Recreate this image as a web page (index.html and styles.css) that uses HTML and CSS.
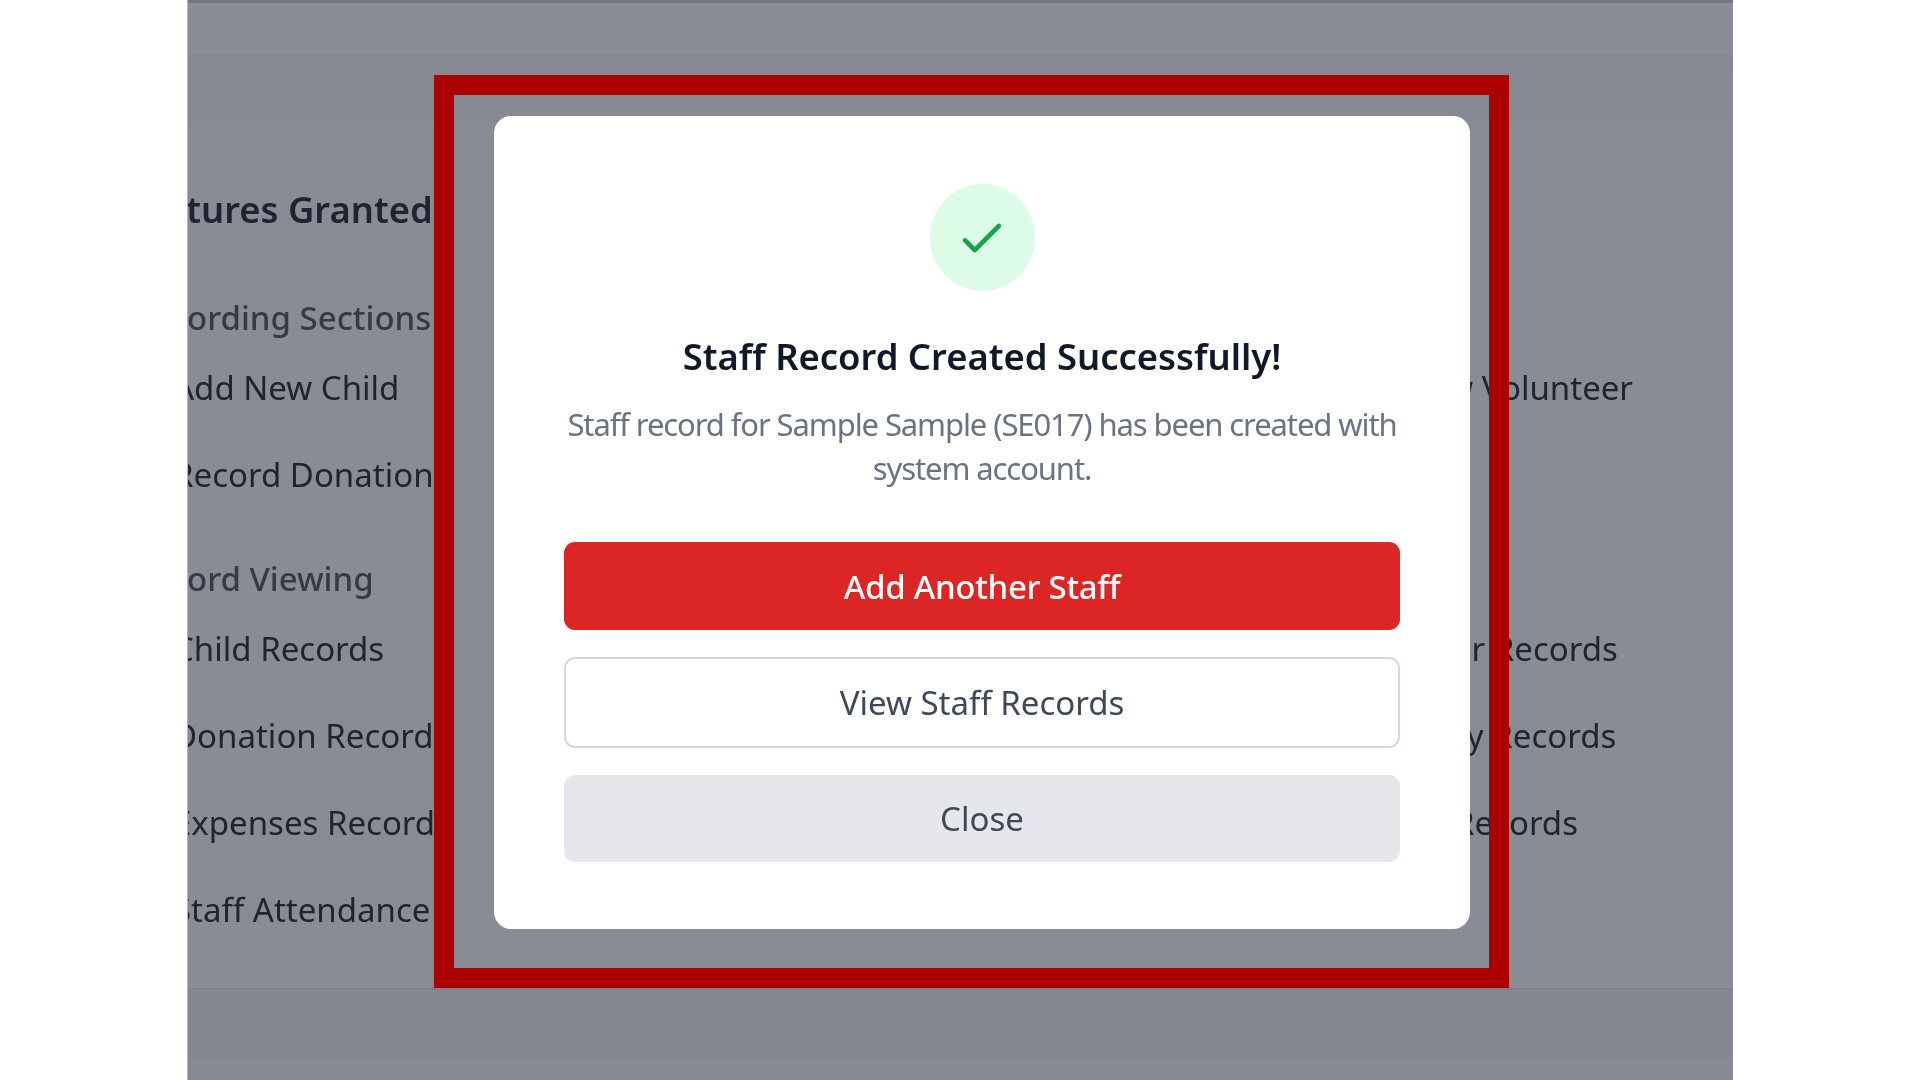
FILE: index.html
```html
<!DOCTYPE html>
<html lang="en">
<head>
<meta charset="utf-8">
<title>Staff Record Created</title>
<link rel="stylesheet" href="styles.css">
</head>
<body>
<div class="page">
  <header class="bar bar-top"></header>
  <div class="bar bar-sub"></div>
  <main class="content">
    <section class="features">
      <h2 class="features-title">Features Granted</h2>
      <div class="feature-columns">
        <div class="column column-left">
          <h3 class="group-title">Recording Sections</h3>
          <ul class="group group-record">
            <li>Add New Child</li>
            <li>Record Donation</li>
          </ul>
          <h3 class="group-title group-title-view">Record Viewing</h3>
          <ul class="group">
            <li>Child Records</li>
            <li>Donation Records</li>
            <li>Expenses Records</li>
            <li>Staff Attendance</li>
          </ul>
        </div>
        <div class="column column-right">
          <h3 class="group-title">&nbsp;</h3>
          <ul class="group group-record">
            <li>Add New Volunteer</li>
            <li>&nbsp;</li>
          </ul>
          <h3 class="group-title group-title-view">&nbsp;</h3>
          <ul class="group">
            <li>Volunteer Records</li>
            <li>Inventory Records</li>
            <li>Activity Records</li>
          </ul>
        </div>
      </div>
    </section>
  </main>
  <div class="bar bar-foot"></div>
  <div class="bar bar-end"></div>

  <div class="overlay">
    <div class="modal" role="dialog" aria-labelledby="modal-title">
      <div class="success-badge">
        <svg class="success-icon" viewBox="0 0 24 24" fill="none" stroke="currentColor" stroke-width="1.9" stroke-linecap="round" stroke-linejoin="round" aria-hidden="true"><path d="M5 13l4 4L19 7"/></svg>
      </div>
      <h1 class="modal-title" id="modal-title">Staff Record Created Successfully!</h1>
      <p class="modal-text">Staff record for Sample Sample (SE017) has been created with system account.</p>
      <div class="modal-actions">
        <button class="btn btn-primary" type="button">Add Another Staff</button>
        <button class="btn btn-outline" type="button">View Staff Records</button>
        <button class="btn btn-muted" type="button">Close</button>
      </div>
    </div>
    <div class="annotation" aria-hidden="true"></div>
  </div>
</div>
</body>
</html>
```

FILE: styles.css
```css
* { box-sizing: border-box; }

html, body { height: 100%; }

body {
  margin: 0;
  background: #ffffff;
  display: flex;
  justify-content: center;
  font-family: "Noto Sans", "Open Sans", "Liberation Sans", sans-serif;
  overflow: hidden;
}

.page {
  position: relative;
  width: 1546px;
  height: 1080px;
  overflow: hidden;
  background: #898c94;
  display: flex;
  flex-direction: column;
  border-left: 1px solid #b4b6bb;
}

.bar { flex: none; }
.bar-top { height: 57px; background: #8a8d95; border-top: 3px solid #73767f; border-bottom: 2px solid #82858d; }
.bar-sub { height: 64px; background: linear-gradient(#868991, #878a92); border-bottom: 1px solid #85888f; }
.bar-foot { height: 68px; background: #858890; border-top: 2px solid #7f828a; }
.bar-end { flex: 1; background: #878a92; border-top: 1px solid #82858d; }

.content {
  height: 867px;
  flex: none;
  padding-top: 64px;
  filter: blur(0.5px);
}

.features { margin-left: -57px; width: 1600px; }

.features-title {
  margin: 0 0 0 -7px;
  font-size: 36.4px;
  line-height: 48px;
  font-weight: 600;
  color: #1f2433;
}

.feature-columns {
  display: flex;
  margin-top: 63px;
}

.column-left { width: 1161px; }
.column-right { flex: 1; }

.group-title {
  margin: 0;
  font-size: 33px;
  line-height: 44px;
  font-weight: 500;
  color: #363a47;
  white-space: nowrap;
}

.group-title-view { margin-top: 60px; }

.group {
  list-style: none;
  margin: 26px 0 0;
  padding: 0 0 0 42px;
  font-size: 33px;
  line-height: 44px;
  color: #20242f;
  white-space: nowrap;
}

.group li + li { margin-top: 43px; }

.overlay {
  position: absolute;
  inset: 0;
  display: flex;
  align-items: flex-start;
  justify-content: flex-start;
  padding: 116px 0 0 306px;
}

.modal {
  width: 976px;
  height: 813px;
  background: #ffffff;
  border-radius: 17px;
  padding: 68px 70px 0;
  display: flex;
  flex-direction: column;
  align-items: center;
  filter: blur(0.5px);
}

.success-badge {
  width: 105px;
  height: 107px;
  border-radius: 50%;
  background: #dcfce7;
  color: #16a34a;
  display: flex;
  align-items: center;
  justify-content: center;
}

.success-icon { width: 58px; height: 58px; }

.modal-title {
  margin: 41px 0 0;
  font-size: 36.4px;
  line-height: 48px;
  font-weight: 600;
  color: #111827;
  text-align: center;
}

.modal-text {
  margin: 22px 0 0;
  font-size: 31px;
  line-height: 44px;
  color: #6b7280;
  letter-spacing: -1.1px;
  text-align: center;
}

.modal-actions {
  align-self: stretch;
  margin-top: 52px;
  display: flex;
  flex-direction: column;
  gap: 27px;
}

.btn {
  display: block;
  width: 100%;
  height: 88px;
  border: 0;
  border-radius: 11px;
  font-family: inherit;
  font-size: 33px;
  padding: 0;
}

.btn-primary { background: #dc2626; color: #ffffff; font-weight: 500; letter-spacing: -0.3px; }
.btn-outline { height: 91px; background: #ffffff; color: #3f4856; border: 2px solid #d3d7df; }
.btn-muted { height: 87px; background: #e5e7eb; color: #3f4856; }

.annotation {
  position: absolute;
  left: 246px;
  top: 75px;
  width: 1075px;
  height: 913px;
  border: 20px solid #aa0000;
  pointer-events: none;
}
```
